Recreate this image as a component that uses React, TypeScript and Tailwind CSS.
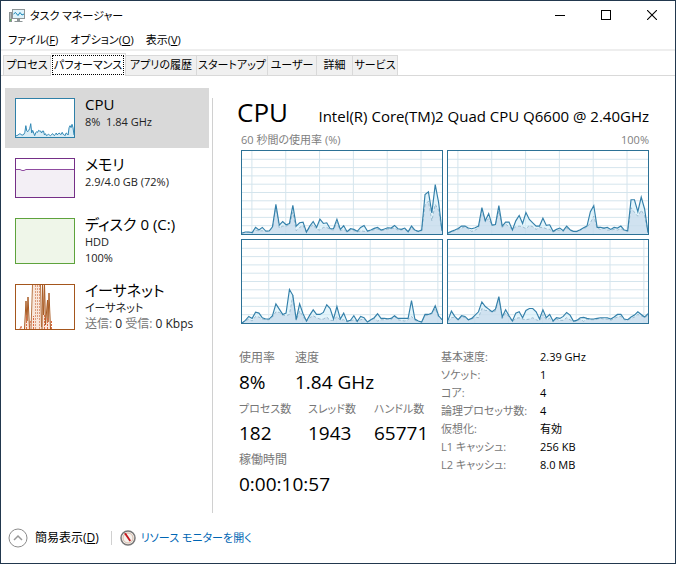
import { useState } from "react";
import clsx from "clsx";

type Tone = "cpu" | "memory" | "disk" | "ethernet";

interface CoreSamples {
  total: number[];
  kernel: number[];
  gridOffset: number;
}

const CHART_W = 606;
const CHART_H = 252;

// Samples are heights on a 0-252 scale, oldest first
const cores: CoreSamples[] = [
  {
    gridOffset: 30,
    total: [3, 6, 6, 4, 20, 12, 20, 9, 9, 22, 90, 27, 38, 28, 32, 87, 24, 34, 36, 6, 24, 38, 20, 45, 32, 34, 16, 16, 45, 14, 25, 7, 16, 14, 8, 20, 26, 9, 12, 17, 20, 12, 15, 19, 18, 26, 16, 14, 18, 7, 24, 12, 8, 12, 120, 128, 64, 150, 96, 10],
    kernel: [2, 5, 5, 3, 12, 9, 10, 8, 8, 20, 84, 18, 24, 24, 28, 66, 10, 20, 26, 5, 20, 28, 14, 12, 20, 20, 14, 12, 36, 10, 14, 6, 12, 10, 6, 10, 8, 8, 10, 13, 15, 10, 12, 15, 16, 18, 12, 12, 15, 6, 18, 10, 7, 10, 88, 100, 40, 90, 72, 8],
  },
  {
    gridOffset: 30,
    total: [3, 8, 12, 17, 24, 24, 18, 16, 19, 24, 80, 40, 62, 27, 29, 86, 24, 36, 36, 12, 40, 56, 32, 65, 44, 34, 24, 24, 48, 26, 28, 8, 14, 18, 10, 24, 13, 8, 8, 13, 19, 24, 68, 86, 20, 20, 18, 20, 14, 20, 18, 24, 12, 10, 104, 104, 68, 112, 76, 4],
    kernel: [2, 6, 10, 14, 18, 22, 16, 8, 12, 18, 70, 38, 46, 26, 28, 70, 20, 30, 22, 14, 22, 24, 22, 16, 26, 22, 14, 20, 20, 16, 14, 6, 10, 12, 8, 18, 11, 7, 7, 11, 17, 20, 34, 54, 18, 14, 18, 12, 12, 14, 12, 16, 10, 8, 80, 66, 54, 72, 56, 4],
  },
  {
    gridOffset: 81,
    total: [0, 8, 20, 14, 33, 30, 16, 12, 12, 22, 58, 42, 26, 30, 102, 84, 10, 58, 28, 6, 24, 40, 26, 26, 32, 55, 44, 12, 50, 12, 30, 5, 8, 22, 5, 20, 16, 3, 10, 16, 28, 14, 14, 13, 14, 22, 14, 14, 14, 14, 68, 12, 6, 3, 26, 26, 30, 52, 22, 10],
    kernel: [0, 6, 12, 6, 20, 18, 12, 10, 10, 18, 34, 32, 24, 22, 26, 84, 8, 36, 20, 4, 16, 22, 16, 12, 12, 18, 8, 8, 20, 8, 10, 3, 6, 10, 4, 10, 12, 3, 8, 14, 6, 10, 10, 12, 10, 20, 10, 8, 6, 10, 20, 8, 5, 3, 22, 24, 28, 44, 18, 10],
  },
  {
    gridOffset: 81,
    total: [8, 36, 20, 10, 22, 20, 10, 14, 24, 34, 64, 50, 42, 34, 42, 80, 18, 40, 22, 6, 30, 34, 16, 38, 44, 44, 34, 12, 40, 16, 26, 6, 16, 14, 20, 32, 24, 6, 8, 16, 17, 14, 12, 12, 14, 16, 16, 16, 12, 18, 26, 26, 12, 10, 18, 24, 34, 26, 18, 28],
    kernel: [4, 16, 18, 8, 20, 16, 10, 12, 18, 16, 44, 38, 38, 34, 36, 76, 14, 30, 18, 4, 14, 16, 12, 10, 12, 16, 10, 6, 26, 10, 14, 4, 12, 8, 8, 16, 10, 4, 6, 12, 5, 12, 10, 10, 12, 14, 12, 12, 8, 14, 18, 20, 10, 9, 14, 18, 26, 22, 16, 24],
  },
];

const cpuHistory = [4, 4, 6, 8, 10, 8, 6, 6, 8, 14, 34, 18, 16, 20, 26, 40, 12, 20, 12, 4, 12, 16, 14, 20, 18, 18, 12, 18, 18, 6, 10, 4, 6, 8, 6, 4, 6, 10, 8, 4, 8, 12, 6, 10, 12, 8, 8, 14, 8, 6, 4, 12, 10, 6, 28, 34, 28, 38, 28, 6];

const tabs = [
  { label: "プロセス", width: "w-12" },
  { label: "パフォーマンス", width: "w-[75px]" },
  { label: "アプリの履歴", width: "w-[71px]" },
  { label: "スタートアップ", width: "w-[71px]" },
  { label: "ユーザー", width: "w-[49px]" },
  { label: "詳細", width: "w-9" },
  { label: "サービス", width: "w-[45px]" },
];

const specs = [
  ["基本速度:", "2.39 GHz"],
  ["ソケット:", "1"],
  ["コア:", "4"],
  ["論理プロセッサ数:", "4"],
  ["仮想化:", "有効"],
  ["L1 キャッシュ:", "256 KB"],
  ["L2 キャッシュ:", "8.0 MB"],
];

function toPoints(samples: number[], width: number, height: number) {
  const step = width / (samples.length - 1);
  return samples.map((v, i) => `${(i * step).toFixed(1)},${height - v}`).join(" ");
}

function CoreChart({ total, kernel, gridOffset }: CoreSamples) {
  const totalPoints = toPoints(total, CHART_W, CHART_H);
  const kernelPoints = toPoints(kernel, CHART_W, CHART_H);
  return (
    <div className="h-[85px] border border-[#2c7196] bg-white">
      <svg viewBox={`0 0 ${CHART_W} ${CHART_H}`} preserveAspectRatio="none" className="block size-full">
        <g stroke="#d5e5ed" strokeWidth="3">
          {[1, 2, 3, 4, 5, 6, 7, 8, 9].map((n) => (
            <line key={n} x1="0" x2={CHART_W} y1={n * 25.2} y2={n * 25.2} />
          ))}
          {[0, 1, 2, 3, 4, 5].map((n) => (
            <line key={n} x1={gridOffset + n * 102.5} x2={gridOffset + n * 102.5} y1="0" y2={CHART_H} />
          ))}
        </g>
        <polygon points={`0,${CHART_H} ${totalPoints} ${CHART_W},${CHART_H}`} fill="#d2effa" fillOpacity="0.6" />
        <polygon points={`0,${CHART_H} ${kernelPoints} ${CHART_W},${CHART_H}`} fill="#c3d6e8" fillOpacity="0.6" />
        <polyline points={kernelPoints} fill="none" stroke="#8fb2c8" strokeWidth="2.5" strokeDasharray="9 6" />
        <polyline points={totalPoints} fill="none" stroke="#3480aa" strokeWidth="3.5" />
      </svg>
    </div>
  );
}

function Thumbnail({ tone }: { tone: Tone }) {
  if (tone === "cpu") {
    return (
      <svg viewBox="0 0 60 40" className="h-10 w-[60px] shrink-0">
        <rect x="0.5" y="0.5" width="59" height="39" fill="#fff" stroke="#2f80a8" />
        <g transform="translate(1 0) scale(0.3333)">
          <polygon points={`0,117 ${toPoints(cpuHistory, 174, 117)} 174,117`} fill="#d9edf6" />
          <polyline points={toPoints(cpuHistory, 174, 117)} fill="none" stroke="#3088b5" strokeWidth="3" />
        </g>
      </svg>
    );
  }
  if (tone === "memory") {
    return (
      <svg viewBox="0 0 60 40" className="h-10 w-[60px] shrink-0">
        <rect x="0.5" y="0.5" width="59" height="39" fill="#fff" stroke="#752f87" />
        <path d="M1 11.5h4l2 1h2l2-1h48V39H1Z" fill="#f3eff5" />
        <path d="M1 11.5h4l2 1h2l2-1h48" fill="none" stroke="#8f4ba0" />
      </svg>
    );
  }
  if (tone === "disk") {
    return (
      <svg viewBox="0 0 60 46" className="h-[46px] w-[60px] shrink-0">
        <rect x="0.5" y="0.5" width="59" height="45" fill="#eff6e9" stroke="#5ea33c" />
      </svg>
    );
  }
  return (
    <svg viewBox="0 0 60 46" className="h-[46px] w-[60px] shrink-0">
      <path d="M9 45 11 17l1 8 1-12 2 32ZM16 45 18 1h7l2 40 1-40h2l2 30 2-22 2 36Z" fill="#f9e6da" />
      <g fill="none">
        <path d="M9.500 45 11 17l1 20 1-24 1.500 32" stroke="#a95c25" />
        <path d="M16 45 17.500 1M25.500 1l1 42" stroke="#b87443" />
        <path d="M27 45l.5-44 1 30 1-30 1 40 2-25 .5 22 1-29 1.500 36" stroke="#a95c25" />
        <path d="M20.500 1v44M22.500 1v34M24.500 1v44" stroke="#dc9c7c" strokeDasharray="2 1" />
        <path d="M5 45l1-3 1 3M11.500 45V30M14.500 45l1-9M18.500 45V32M29.500 45V30M32.500 45V34M36.500 45v-9" stroke="#db6a42" strokeDasharray="2 1" />
      </g>
      <rect x="0.5" y="0.5" width="59" height="45" fill="none" stroke="#a4561d" />
    </svg>
  );
}

interface ResourceItemProps {
  tone: Tone;
  title: string;
  selected: boolean;
  onSelect: () => void;
  children: React.ReactNode;
}

function ResourceItem({ tone, title, selected, onSelect, children }: ResourceItemProps) {
  return (
    <button
      type="button"
      onClick={onSelect}
      aria-pressed={selected}
      className={clsx("flex w-full items-start gap-[10px] p-[10px] text-left", selected && "bg-[#d9d9d9]")}
    >
      <Thumbnail tone={tone} />
      <span className="-mt-1 -mb-2 min-w-0 flex-1 text-[11px] leading-4 whitespace-nowrap text-[#222]">
        <span className="block text-[15px] leading-5 text-black">{title}</span>
        {children}
      </span>
    </button>
  );
}

interface StatProps {
  label: string;
  value: string;
  width?: string;
  compact?: boolean;
}

function Stat({ label, value, width, compact }: StatProps) {
  return (
    <div className={clsx("whitespace-nowrap", width)}>
      <dt className={clsx("leading-5 text-[#777]", compact ? "text-[11px]" : "text-xs")}>{label}</dt>
      <dd className="text-[19px] leading-7 text-black">{value}</dd>
    </div>
  );
}

function WindowControls() {
  const button = "flex h-7 w-[46px] items-center justify-center hover:bg-neutral-200";
  return (
    <div className="flex">
      <button type="button" aria-label="最小化" className={button}>
        <svg viewBox="0 0 10 10" className="size-[10px]">
          <path d="M0 5.5h10" stroke="#000" />
        </svg>
      </button>
      <button type="button" aria-label="最大化" className={button}>
        <svg viewBox="0 0 10 10" className="size-[10px]">
          <rect x="0.5" y="0.5" width="9" height="9" fill="none" stroke="#000" />
        </svg>
      </button>
      <button type="button" aria-label="閉じる" className={button}>
        <svg viewBox="0 0 10 10" className="size-[10px]">
          <path d="m0 0 10 10M10 0 0 10" stroke="#000" strokeWidth="1.1" />
        </svg>
      </button>
    </div>
  );
}

function AppIcon() {
  return (
    <svg viewBox="0 0 16 16" className="size-4">
      <rect x="0.5" y="4.5" width="2" height="9" fill="#b5bbbd" stroke="#8b9294" />
      <path d="M1 11h1v2H1Z" fill="#5ebd58" />
      <rect x="3.5" y="1.5" width="12" height="9" fill="#dff3fb" stroke="#8d9597" />
      <path d="m4.500 6 2-1.500L9 7.500l2-3L13 7l2-1" fill="none" stroke="#1684b5" />
      <path d="M8 11h3v2H8ZM5.500 13h8v1h-8Z" fill="#8d9597" />
    </svg>
  );
}

export default function App() {
  const [activeTab, setActiveTab] = useState("パフォーマンス");
  const [resource, setResource] = useState<Tone>("cpu");

  return (
    <div className="flex min-h-screen flex-col border border-[#22384e] bg-white font-['Open_Sans','Noto_Sans_CJK_JP',sans-serif] text-xs text-black [font-feature-settings:'palt']">
      <header className="flex h-[30px] items-start justify-between">
        <div className="flex h-[30px] items-center gap-[5px] pl-2">
          <AppIcon />
          <h1 className="text-[11px]">タスク マネージャー</h1>
        </div>
        <WindowControls />
      </header>

      <nav className="flex h-5 items-center gap-3 border-b-2 border-[#eee] pl-[7px] text-[11px] leading-4">
        <button type="button">ファイル(<u>F</u>)</button>
        <button type="button">オプション(<u>O</u>)</button>
        <button type="button">表示(<u>V</u>)</button>
      </nav>

      <div role="tablist" className="flex h-[25px] items-end border-b border-[#d9d9d9] pl-[2px]">
        {tabs.map(({ label, width }) => {
          const active = label === activeTab;
          return (
            <button
              key={label}
              type="button"
              role="tab"
              aria-selected={active}
              onClick={() => setActiveTab(label)}
              className={clsx(
                "flex shrink-0 justify-center border-r border-t border-[#d9d9d9] text-[11px] leading-[18px] whitespace-nowrap first:border-l",
                width,
                active ? "-mb-px h-[23px] bg-white p-px" : "h-5 bg-[#f0f0f0]"
              )}
            >
              {active ? (
                <span className="flex flex-1 justify-center border border-dotted border-black">{label}</span>
              ) : (
                label
              )}
            </button>
          );
        })}
      </div>

      <main className="flex flex-1 pt-3 pl-1">
        <aside className="w-[204px] shrink-0">
          <ResourceItem tone="cpu" title="CPU" selected={resource === "cpu"} onSelect={() => setResource("cpu")}>
            <span className="block">8%&nbsp; 1.84 GHz</span>
          </ResourceItem>
          <ResourceItem tone="memory" title="メモリ" selected={resource === "memory"} onSelect={() => setResource("memory")}>
            <span className="block">2.9/4.0 GB (72%)</span>
          </ResourceItem>
          <ResourceItem tone="disk" title="ディスク 0 (C:)" selected={resource === "disk"} onSelect={() => setResource("disk")}>
            <span className="block">HDD</span>
            <span className="block">100%</span>
          </ResourceItem>
          <ResourceItem tone="ethernet" title="イーサネット" selected={resource === "ethernet"} onSelect={() => setResource("ethernet")}>
            <span className="block">イーサネット</span>
            <span className="block text-xs">
              <span className="text-[#777]">送信:</span> 0 <span className="text-[#777]">受信:</span> 0 Kbps
            </span>
          </ResourceItem>
        </aside>

        <section className="mt-[10px] ml-[3px] min-w-0 flex-1 border-l border-[#d0d0d0] pr-[26px] pl-7">
          <div className="flex items-baseline justify-between whitespace-nowrap">
            <h2 className="-ml-1 text-[26px] leading-7">CPU</h2>
            <p className="text-[15px] leading-7">Intel(R) Core(TM)2 Quad CPU Q6600 @ 2.40GHz</p>
          </div>
          <div className="flex justify-between text-[11px] leading-5 text-[#808080]">
            <span>60 秒間の使用率 (%)</span>
            <span>100%</span>
          </div>
          <div className="grid grid-cols-2 gap-1">
            {cores.map((core, i) => (
              <CoreChart key={i} {...core} />
            ))}
          </div>

          <div className="mt-6 flex">
            <dl className="-ml-[2px] flex w-[202px] shrink-0 flex-col gap-[3px]">
              <div className="flex">
                <Stat label="使用率" value="8%" width="w-14" />
                <Stat label="速度" value="1.84 GHz" />
              </div>
              <div className="flex">
                <Stat label="プロセス数" value="182" width="w-[69px]" compact />
                <Stat label="スレッド数" value="1943" width="w-[66px]" compact />
                <Stat label="ハンドル数" value="65771" compact />
              </div>
              <Stat label="稼働時間" value="0:00:10:57" />
            </dl>
            <table className="self-start text-[11px] leading-[18px]">
              <tbody>
                {specs.map(([label, value]) => (
                  <tr key={label}>
                    <th scope="row" className="w-[99px] p-0 text-left font-normal whitespace-nowrap text-[#777]">{label}</th>
                    <td className="p-0 whitespace-nowrap">{value}</td>
                  </tr>
                ))}
              </tbody>
            </table>
          </div>
        </section>
      </main>

      <footer className="flex h-[50px] items-center pl-[7px]">
        <button type="button" className="flex items-center gap-[7px]">
          <svg viewBox="0 0 20 20" className="size-5" fill="none">
            <circle cx="10" cy="10" r="9" stroke="#8c8c8c" />
            <path d="m6 12 4-4 4 4" stroke="#999" strokeWidth="1.5" />
          </svg>
          <span>簡易表示(<u>D</u>)</span>
        </button>
        <span className="mr-2 ml-3 h-[14px] w-px bg-[#d0d0d0]" />
        <a href="#resource-monitor" className="flex items-center gap-[5px] text-[11px] text-[#0066b4]">
          <svg viewBox="0 0 16 16" className="size-4">
            <circle cx="8" cy="8" r="7" fill="#f5f1ed" stroke="#777" strokeWidth="1.5" />
            <circle cx="8" cy="8" r="5" fill="none" stroke="#d5b9a8" />
            <path d="m4 3.500 2-.5 5 7.500-1.500 1Z" fill="#c4161c" />
          </svg>
          リソース モニターを開く
        </a>
      </footer>
    </div>
  );
}
